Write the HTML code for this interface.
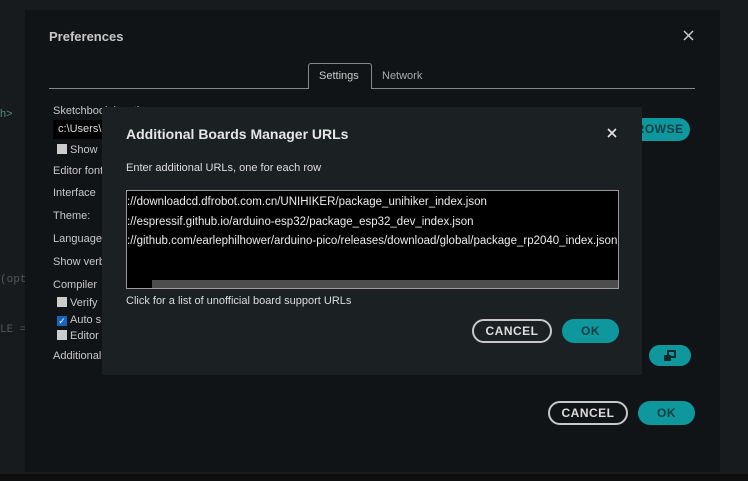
<!DOCTYPE html>
<html><head><meta charset="utf-8"><style>
*{margin:0;padding:0;box-sizing:border-box}
body{width:748px;height:481px;background:#181b1e;font-family:"Liberation Sans",sans-serif;color:#dadada;position:relative;overflow:hidden;font-size:11px}
.a{position:absolute;white-space:nowrap}
#pref{position:absolute;left:25px;top:10px;width:695px;height:462px;background:#111417}
.lbl{position:absolute;left:28px;color:#c8c8c8;font-size:11px}
.cb{display:inline-block;width:10px;height:10px;background:#ccc;vertical-align:-1px;margin-right:3px}
.btn{position:absolute;border-radius:12px;font-weight:bold;font-size:12px;text-align:center;letter-spacing:.5px}
.cancel{border:2px solid #c8c8c8;color:#ddd}
.ok{background:#0f979e;color:#0b3f44}
#dlg{position:absolute;left:102px;top:107px;width:540px;height:268px;background:#1b2023}
</style></head><body>
<div class="a" style="left:0;top:108px;color:#4c8c7a;font-size:11px">h&gt;</div>
<div class="a" style="left:0;top:274px;color:#555;font-family:'Liberation Mono';font-size:11px">(opt</div>
<div class="a" style="left:0;top:324px;color:#555;font-family:'Liberation Mono';font-size:11px">LE =</div>
<div style="position:absolute;left:0;top:474px;width:748px;height:7px;background:#0c0e10"></div>
<div id="pref">
 <div class="a" style="left:24px;top:19px;font-size:13px;font-weight:bold;color:#c8c8c8">Preferences</div>
 <svg class="a" style="left:658px;top:20px" width="11" height="11" viewBox="0 0 11 11"><path d="M1 1L10 10M10 1L1 10" stroke="#ccc" stroke-width="1.5"/></svg>
 <div style="position:absolute;left:24px;top:78px;width:646px;height:1px;background:#888"></div>
 <div style="position:absolute;left:283px;top:53px;width:64px;height:26px;border:1px solid #888;border-bottom:none;border-radius:3px 3px 0 0;background:#111417"></div>
 <div class="a" style="left:294px;top:60px;color:#ccc">Settings</div>
 <div class="a" style="left:357px;top:60px;color:#aaa">Network</div>
 <div class="lbl" style="top:95px">Sketchbook location:</div>
 <div style="position:absolute;left:28px;top:110px;width:60px;height:19px;background:#000"></div>
 <div class="a" style="left:33px;top:113px;color:#ddd">c:\Users\</div>
 <div class="lbl" style="top:134px;left:32px"><span class="cb"></span>Show</div>
 <div class="lbl" style="top:155px">Editor font</div>
 <div class="lbl" style="top:177px">Interface</div>
 <div class="lbl" style="top:200px">Theme:</div>
 <div class="lbl" style="top:223px">Language</div>
 <div class="lbl" style="top:246px">Show verb</div>
 <div class="lbl" style="top:269px">Compiler</div>
 <div class="lbl" style="top:287px;left:32px"><span class="cb"></span>Verify</div>
 <div class="lbl" style="top:304px;left:32px"><span class="cb" style="background:#1565c0;color:#fff;font-size:9px;line-height:10px;text-align:center">✓</span>Auto s</div>
 <div class="lbl" style="top:320px;left:32px"><span class="cb"></span>Editor</div>
 <div class="lbl" style="top:340px">Additional</div>
 <div class="btn ok" style="left:595px;top:108px;width:70px;height:23px;line-height:23px">BROWSE</div>
 <div class="btn ok" style="left:624px;top:335px;width:42px;height:21px"><svg width="14" height="12" viewBox="0 0 14 12" style="margin-top:5px"><rect x="5" y="1" width="7" height="6" fill="none" stroke="#0a2a2e" stroke-width="2"/><rect x="1" y="5" width="7" height="6" fill="#0a2a2e"/></svg></div>
 <div class="btn cancel" style="left:523px;top:391px;width:80px;height:24px;line-height:20px">CANCEL</div>
 <div class="btn ok" style="left:613px;top:391px;width:57px;height:24px;line-height:24px">OK</div>
</div>
<div id="dlg">
 <div class="a" style="left:24px;top:19px;font-size:14px;font-weight:bold;color:#e6e6e6">Additional Boards Manager URLs</div>
 <svg class="a" style="left:505px;top:21px" width="10" height="10" viewBox="0 0 10 10"><path d="M1 1L9 9M9 1L1 9" stroke="#e6e6e6" stroke-width="1.6"/></svg>
 <div class="a" style="left:24px;top:55px;color:#ddd">Enter additional URLs, one for each row</div>
 <div style="position:absolute;left:24px;top:83px;width:493px;height:99px;background:#000;border:1px solid #999;overflow:hidden">
  <div class="a" style="left:0;top:2px;line-height:19.5px;font-size:11.5px;color:#eee">://downloadcd.dfrobot.com.cn/UNIHIKER/package_unihiker_index.json<br>://espressif.github.io/arduino-esp32/package_esp32_dev_index.json<br>://github.com/earlephilhower/arduino-pico/releases/download/global/package_rp2040_index.json</div>
  <div style="position:absolute;left:25px;bottom:0;right:0;height:8px;background:#4d4d4d"></div>
 </div>
 <div class="a" style="left:24px;top:188px;color:#ddd">Click for a list of unofficial board support URLs</div>
 <div class="btn cancel" style="left:370px;top:212px;width:80px;height:24px;line-height:20px">CANCEL</div>
 <div class="btn ok" style="left:460px;top:212px;width:57px;height:24px;line-height:24px">OK</div>
</div>
</body></html>
